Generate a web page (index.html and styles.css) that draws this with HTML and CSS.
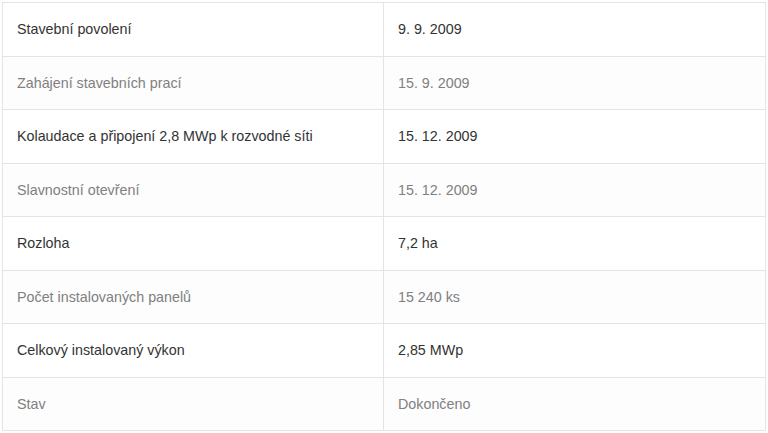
FILE: index.html
```html
<!DOCTYPE html>
<html lang="cs">
<head>
<meta charset="utf-8">
<link rel="stylesheet" href="styles.css">
</head>
<body>
<table class="info">
  <tbody>
    <tr class="dark"><td>Stavební povolení</td><td>9. 9. 2009</td></tr>
    <tr class="light"><td>Zahájení stavebních prací</td><td>15. 9. 2009</td></tr>
    <tr class="dark"><td>Kolaudace a připojení 2,8 MWp k rozvodné síti</td><td>15. 12. 2009</td></tr>
    <tr class="light"><td>Slavnostní otevření</td><td>15. 12. 2009</td></tr>
    <tr class="dark"><td>Rozloha</td><td>7,2 ha</td></tr>
    <tr class="light"><td>Počet instalovaných panelů</td><td>15 240 ks</td></tr>
    <tr class="dark"><td>Celkový instalovaný výkon</td><td>2,85 MWp</td></tr>
    <tr class="light"><td>Stav</td><td>Dokončeno</td></tr>
  </tbody>
</table>
</body>
</html>
```
FILE: styles.css
```css
html, body {
  margin: 0;
  padding: 0;
  background: #fff;
}
body {
  padding: 2px 2px 0 2px;
  font-family: "Liberation Sans", Arial, sans-serif;
  font-size: 14.3px;
}
.info {
  width: 764px;
  border-collapse: collapse;
  table-layout: fixed;
}
.info td {
  border: 1px solid #e4e4e4;
  height: 53.5px;
  padding: 0 14px;
  box-sizing: border-box;
  vertical-align: middle;
}
.info td:first-child {
  width: 381px;
}
.dark td {
  color: #333;
}
.light td {
  color: #808080;
  background: #fdfdfd;
}
```
